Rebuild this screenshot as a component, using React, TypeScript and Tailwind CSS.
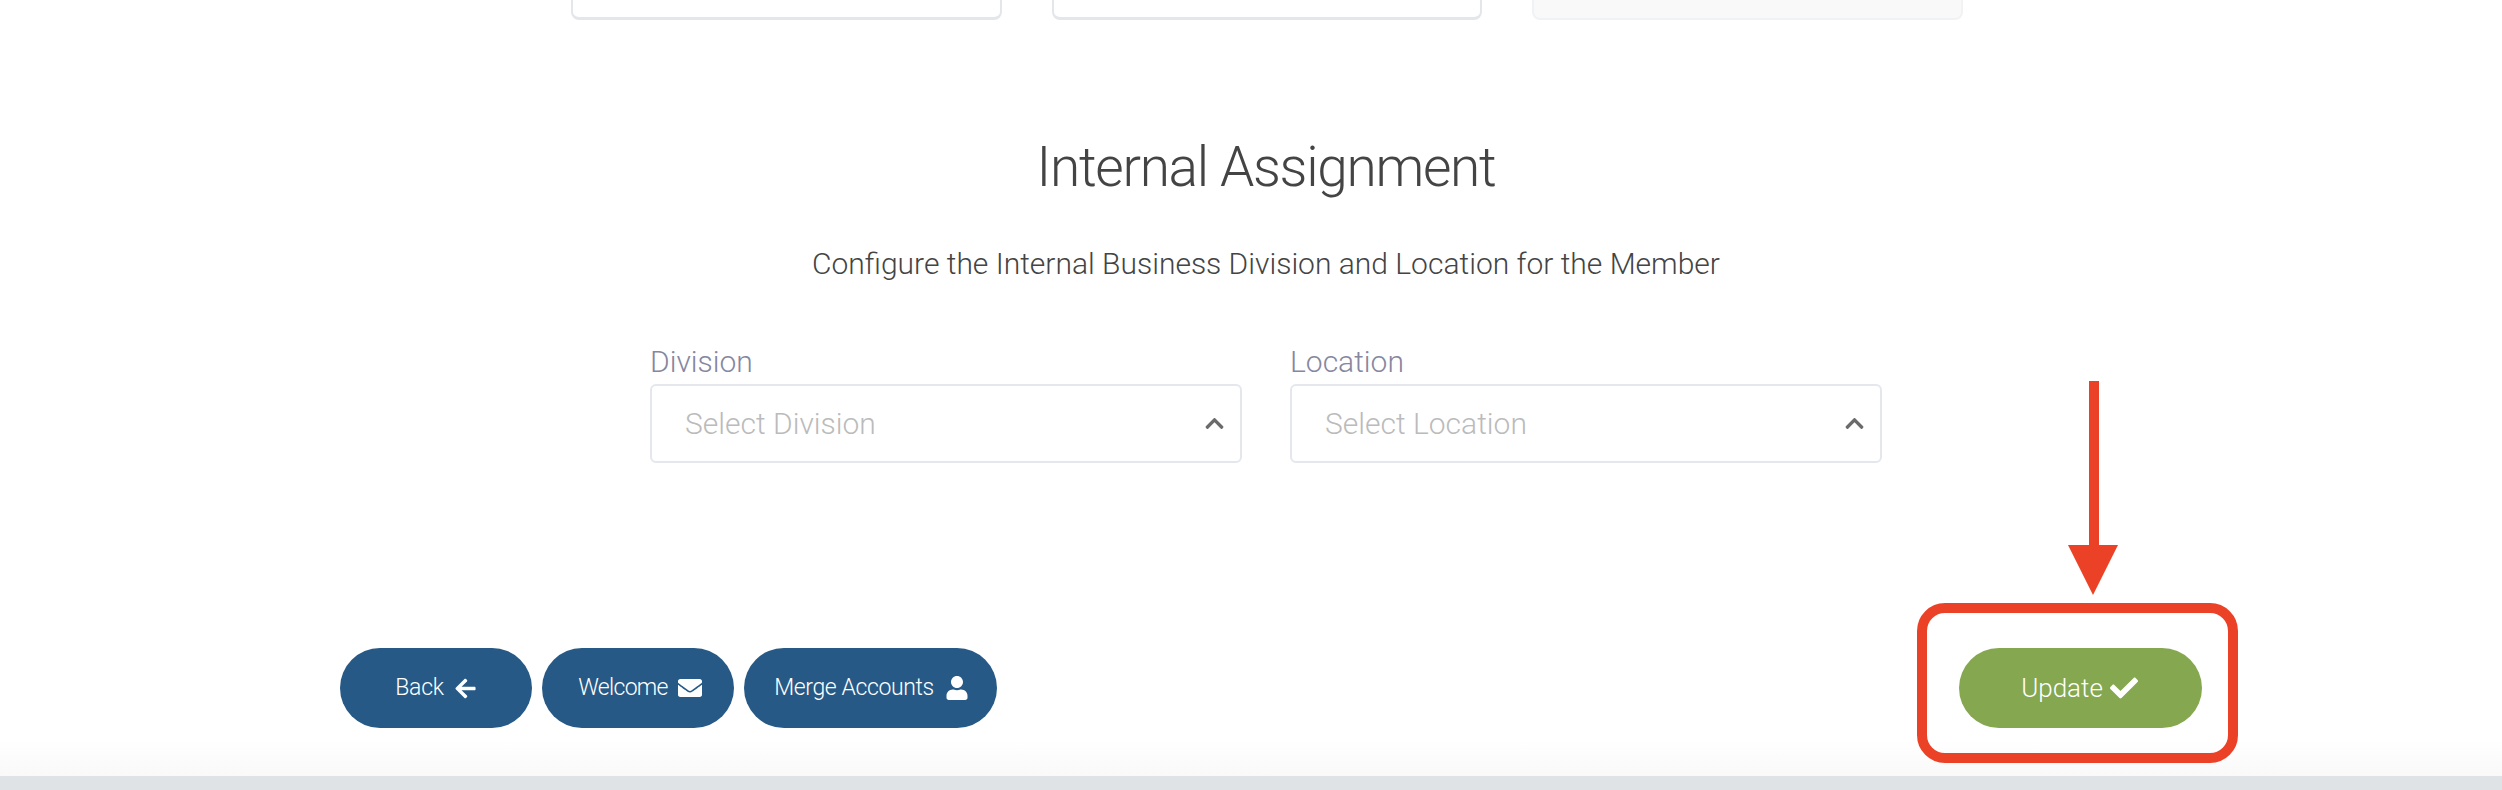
import { FaArrowLeft, FaCheck, FaChevronUp, FaEnvelope, FaUser } from "react-icons/fa";

const selects = [
  { label: "Division", placeholder: "Select Division" },
  { label: "Location", placeholder: "Select Location" },
];

export default function App() {
  return (
    <div className="relative flex h-[790px] w-full flex-col overflow-hidden bg-white font-['Roboto',sans-serif] font-light">
      {/* Cards cut off by the top of the window */}
      <div className="ml-[571px] grid h-[20px] w-[1392px] grid-cols-3 gap-x-[50px]">
        <div className="rounded-b-lg border-x-2 border-b-[3px] border-[#e3e7ec] bg-white" />
        <div className="rounded-b-lg border-x-2 border-b-[3px] border-[#e3e7ec] bg-white" />
        <div className="rounded-b-lg border-x-2 border-b-2 border-[#f1f2f3] bg-[#f9f9f9]" />
      </div>

      {/* Internal Assignment */}
      <h2 className="mt-[112px] ml-[30px] text-center text-[55px] leading-[70px] tracking-[-1.3px] text-[#444444]">
        Internal Assignment
      </h2>
      <p className="mt-[42px] ml-[30px] text-center text-[30px] leading-[40px] text-[#444444]">
        Configure the Internal Business Division and Location for the Member
      </p>

      <div className="mt-[58px] ml-[650px] grid w-[1232px] grid-cols-2 gap-x-[48px]">
        {selects.map((item) => (
          <div key={item.label} className="flex flex-col">
            <label className="text-[30px] leading-[40px] text-[#85879f]">{item.label}</label>
            <div className="mt-[2px] flex h-[79px] items-center justify-between rounded-md border-2 border-[#e4e7ec] pr-[15px] pl-[33px]">
              <span className="text-[30px] text-[#bbbbbb]">{item.placeholder}</span>
              <FaChevronUp size={21} className="text-[#6b6b6b]" />
            </div>
          </div>
        ))}
      </div>

      {/* Action buttons */}
      <div className="mt-[185px] ml-[340px] flex w-[1862px] justify-between">
        <div className="flex gap-[10px]">
          <button className="flex h-[80px] w-[192px] items-center justify-center gap-[10px] rounded-full bg-[#265985] text-[23px] tracking-[-0.3px] text-white">
            Back <FaArrowLeft size={23} />
          </button>
          <button className="flex h-[80px] w-[192px] items-center justify-center gap-[10px] rounded-full bg-[#265985] pl-[4px] text-[23px] tracking-[-0.7px] text-white">
            Welcome <FaEnvelope size={24} />
          </button>
          <button className="flex h-[80px] w-[253px] items-center justify-center gap-[11px] rounded-full bg-[#265985] pl-[2px] text-[23px] tracking-[-0.4px] text-white">
            Merge Accounts <FaUser size={24} />
          </button>
        </div>
        <button className="flex h-[80px] w-[243px] items-center justify-center gap-[7px] rounded-full bg-[#84a750] pr-[2px] text-[26px] text-white">
          Update <FaCheck size={28} />
        </button>
      </div>

      <div className="mt-auto h-[36px] bg-gradient-to-b from-white to-[#f9f9f9]" />
      <div className="h-[14px] bg-[#dfe3e6]" />

      {/* Red annotation drawn over the screenshot */}
      <div className="absolute top-[603px] left-[1917px] h-[160px] w-[321px] rounded-[28px] border-[10px] border-[#eb4227]" />
      <svg className="absolute top-[381px] left-[2068px]" width="50" height="214" viewBox="0 0 50 214">
        <path d="M21 0h10v164h19l-25 50L0 164h21z" fill="#eb4227" />
      </svg>
    </div>
  );
}
